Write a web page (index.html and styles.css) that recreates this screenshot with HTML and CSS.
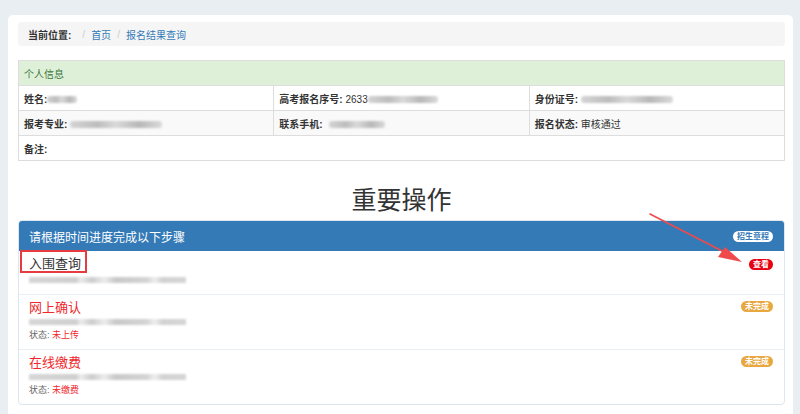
FILE: index.html
```html
<!DOCTYPE html>
<html lang="zh-CN">
<head>
<meta charset="utf-8">
<title>报名结果查询</title>
<link rel="stylesheet" href="styles.css">
</head>
<body>
<div class="card">
  <div class="crumb">
    <b class="crumb-label">当前位置:</b>
    <span class="sep first-sep">/</span><a class="link">首页</a>
    <span class="sep">/</span><a class="link">报名结果查询</a>
  </div>

  <table class="info">
    <tr class="head"><td colspan="3">个人信息</td></tr>
    <tr>
      <td><b>姓名:</b><span class="blur w30"></span></td>
      <td><b>高考报名序号:</b> 2633<span class="blur w70"></span></td>
      <td><b>身份证号:</b> <span class="blur w92"></span></td>
    </tr>
    <tr class="stripe">
      <td><b>报考专业:</b> <span class="blur w92"></span></td>
      <td><b>联系手机:</b> <span class="blur w56 ml"></span></td>
      <td><b>报名状态:</b> 审核通过</td>
    </tr>
    <tr><td colspan="3"><b>备注:</b></td></tr>
  </table>

  <h1 class="title">重要操作</h1>

  <div class="panel">
    <div class="panel-head">
      <span>请根据时间进度完成以下步骤</span>
      <span class="badge badge-white">招生章程</span>
    </div>
    <div class="item first">
      <div class="item-row">
        <span class="item-title">入围查询</span>
        <span class="badge badge-red">查看</span>
      </div>
      <div class="blurline"></div>
      <div class="mark"></div>
    </div>
    <div class="item">
      <div class="item-row">
        <span class="item-title red">网上确认</span>
        <span class="badge badge-orange">未完成</span>
      </div>
      <div class="blurline"></div>
      <div class="status">状态: <span class="red">未上传</span></div>
    </div>
    <div class="item">
      <div class="item-row">
        <span class="item-title red">在线缴费</span>
        <span class="badge badge-orange">未完成</span>
      </div>
      <div class="blurline"></div>
      <div class="status">状态: <span class="red">未缴费</span></div>
    </div>
  </div>

  <svg class="arrow" width="110" height="60" viewBox="0 0 110 60">
    <line x1="2" y1="2" x2="80" y2="42" stroke="#ef4a4c" stroke-width="1.6" stroke-linecap="round"/>
    <polygon points="94,50 70,45 77,35" fill="#ef4a4c"/>
  </svg>
</div>
</body>
</html>
```

FILE: styles.css
```css
* { box-sizing: border-box; }
html, body { margin: 0; padding: 0; }
body {
  background: #e9eef2;
  font-family: "Liberation Sans", "Noto Sans CJK SC", sans-serif;
  font-size: 10px;
  color: #333;
  height: 414px;
  overflow: hidden;
}
.card {
  position: relative;
  margin: 15px 7px 0 8px;
  background: #fff;
  border-radius: 5px;
  padding: 7px 8px 20px 10px;
  min-height: 420px;
}
.crumb {
  height: 24px;
  background: #f5f5f5;
  border-radius: 4px;
  display: flex;
  align-items: center;
  padding: 0 10px;
}
.crumb-label { font-weight: bold; color: #333; }
.sep { color: #ccc; margin: 0 6px 0 6px; }
.first-sep { margin-left: 11px; }
.link { color: #337ab7; }
.info {
  margin-top: 14px;
  width: 100%;
  border-collapse: collapse;
  table-layout: fixed;
  border: 1px solid #ddd;
}
.info td {
  height: 25px;
  padding: 0 5px;
  border: 1px solid #ddd;
  vertical-align: middle;
  white-space: nowrap;
}
.info b { font-weight: bold; }
.info .head td { background: #dff0d8; color: #3c763d; }
.info .stripe td { background: #f9f9f9; }
.blur {
  display: inline-block;
  vertical-align: middle;
  height: 7px;
  border-radius: 3px;
  background: linear-gradient(90deg, #d4d4d4 0%, #bdbdbd 30%, #d9d9d9 50%, #b8b8b8 75%, #dadada 100%);
  filter: blur(1.2px);
}
.w30 { width: 30px; }
.w56 { width: 56px; }
.w70 { width: 70px; }
.w92 { width: 92px; }
.ml { margin-left: 4px; }
.title {
  margin: 19px 0 0;
  height: 40px;
  text-align: center;
  font-size: 25px;
  font-weight: normal;
  line-height: 40px;
  color: #333;
}
.panel {
  border: 1px solid #dde6ee;
  border-radius: 4px;
  overflow: hidden;
}
.panel-head {
  height: 30px;
  background: #337ab7;
  color: #fff;
  font-size: 12px;
  display: flex;
  align-items: center;
  justify-content: space-between;
  padding: 0 11px 0 10px;
}
.badge {
  display: inline-block;
  font-size: 8px;
  font-weight: bold;
  line-height: 11px;
  padding: 0 4px;
  border-radius: 7px;
  color: #fff;
}
.badge-white { background: #fff; color: #337ab7; }
.badge-red { background: #e60012; }
.badge-orange { background: #e8a73f; }
.item {
  position: relative;
  padding: 2px 11px 7px 10px;
  border-top: 1px solid #e9eef2;
}
.item.first { border-top: none; height: 43px; }
.item-row {
  display: flex;
  justify-content: space-between;
  align-items: center;
  height: 18px;
}
.item-title { font-size: 13px; }
.item .badge { align-self: flex-start; margin-top: 4px; }
.item.first .badge { margin-top: 6px; }
.red { color: #f0282d; }
.blurline {
  width: 157px;
  height: 6px;
  margin-top: 4px;
  background: linear-gradient(90deg, #d6d6d6 0%, #cfcfcf 30%, #ececec 33%, #cccccc 40%, #ececec 48%, #c9c9c9 55%, #d4d4d4 75%, #eeeeee 80%, #d2d2d2 85%, #d6d6d6 100%);
  filter: blur(0.8px);
}
.item.first .blurline { margin-top: 6px; }
.status {
  margin-top: 4px;
  font-size: 9px;
  line-height: 13px;
  color: #666;
}
.mark {
  position: absolute;
  left: 1px;
  top: -1px;
  width: 67px;
  height: 23px;
  border: 2px solid #e53c3f;
}
.arrow {
  position: absolute;
  left: 640px;
  top: 197px;
}
```
